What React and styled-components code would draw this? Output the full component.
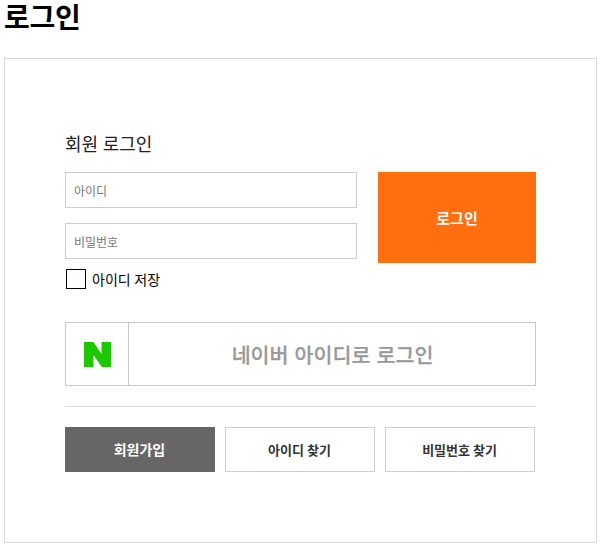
import React, { useState } from 'react'
import styled, { createGlobalStyle } from 'styled-components'

const GlobalStyle = createGlobalStyle`
  * {
    box-sizing: border-box;
  }
  body {
    margin: 0;
    background: #fff;
    color: #000;
    font-family: 'Noto Sans CJK KR', sans-serif;
  }
  button, input {
    font-family: inherit;
  }
`

const Page = styled.main`
  padding: 0 3px 0 4px;
`

const Title = styled.h2`
  height: 58px;
  margin: 0;
  font-size: 28px;
  font-weight: 700;
  line-height: 33px;
  letter-spacing: -0.2px;
`

const LoginBox = styled.div`
  width: 593px;
  height: 485px;
  padding: 70px 60px 0;
  border: 1px solid #dbdbdb;
`

const SubTitle = styled.h3`
  height: 43px;
  margin: 0;
  color: #222;
  font-size: 18px;
  font-weight: 400;
  line-height: 28px;
  word-spacing: 0.5px;
`

const Form = styled.form`
  display: flex;
  justify-content: space-between;
  width: 471px;
`

const Fields = styled.div`
  display: flex;
  flex-direction: column;
  gap: 15px;
`

const Input = styled.input`
  width: 292px;
  height: 36px;
  padding: 0 8px;
  border: 1px solid #ccc;
  border-radius: 0;
  outline: none;
  font-size: 12px;

  &::placeholder {
    color: #757575;
    opacity: 1;
  }
`

const LoginButton = styled.button`
  width: 158px;
  height: 91px;
  padding: 0;
  border: 0;
  background: #ff6f0f;
  color: #fff;
  font-size: 15px;
  font-weight: 700;
`

const SaveId = styled.label`
  display: flex;
  align-items: center;
  gap: 6px;
  height: 20px;
  margin: 6px 0 33px 1px;
  font-size: 14px;
  line-height: 20px;
  word-spacing: 0.5px;
`

const Checkbox = styled.input`
  appearance: none;
  width: 20px;
  height: 20px;
  margin: 0;
  border: 1px solid #000;
  background: ${(props) => (props.checked ? '#000' : '#fff')};
`

const NaverButton = styled.button`
  display: flex;
  width: 471px;
  height: 64px;
  padding: 0;
  border: 1px solid #c8c8c8;
  background: #fff;
`

const NaverLogo = styled.span`
  display: flex;
  align-items: center;
  justify-content: center;
  width: 63px;
  height: 62px;
  border-right: 1px solid #c8c8c8;
`

const NaverText = styled.span`
  flex: 1;
  padding-left: 1px;
  color: #999;
  font-size: 20.6px;
  font-weight: 500;
  line-height: 62px;
  word-spacing: 1.5px;
  -webkit-text-stroke: 0.25px #999;
`

const Line = styled.hr`
  width: 471px;
  height: 1px;
  margin: 20px 0;
  border: 0;
  background: #dbdbdb;
`

const MemberMenu = styled.div`
  display: flex;
  gap: 10px;
`

const MenuButton = styled.button`
  width: 150px;
  height: 45px;
  padding: 0 1px 1px 0;
  border: 1px solid ${(props) => (props.$dark ? '#666' : '#ccc')};
  background: ${(props) => (props.$dark ? '#666' : '#fff')};
  color: ${(props) => (props.$dark ? '#fff' : '#333')};
  font-size: ${(props) => (props.$dark ? '14px' : '13px')};
  font-weight: 700;
`

const App = () => {
  const [saveId, setSaveId] = useState(false)

  return (
    <Page>
      <GlobalStyle />
      <Title>로그인</Title>
      <LoginBox>
        <SubTitle>회원 로그인</SubTitle>
        <Form onSubmit={(e) => e.preventDefault()}>
          <Fields>
            <Input type="text" placeholder="아이디" />
            <Input type="password" placeholder="비밀번호" />
          </Fields>
          <LoginButton type="submit">로그인</LoginButton>
        </Form>
        <SaveId>
          <Checkbox type="checkbox" checked={saveId} onChange={(e) => setSaveId(e.target.checked)} />
          <span>아이디 저장</span>
        </SaveId>
        <NaverButton type="button">
          <NaverLogo>
            <svg width="27" height="25" viewBox="0 0 27 25">
              <path fill="#1ec800" d="M0 0h9.5l8 12V0H27v25h-9.2L9.5 13v12H0z" />
            </svg>
          </NaverLogo>
          <NaverText>네이버 아이디로 로그인</NaverText>
        </NaverButton>
        <Line />
        <MemberMenu>
          <MenuButton $dark>회원가입</MenuButton>
          <MenuButton>아이디 찾기</MenuButton>
          <MenuButton>비밀번호 찾기</MenuButton>
        </MemberMenu>
      </LoginBox>
    </Page>
  )
}

export default App
